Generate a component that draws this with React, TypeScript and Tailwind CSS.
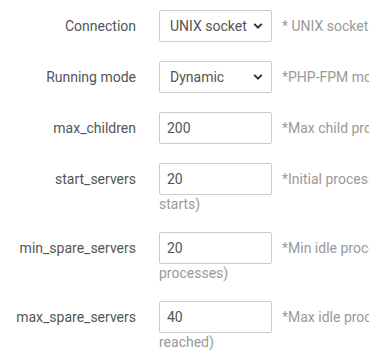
import React from "react";

type Row = {
  label: string;
  kind: "select" | "input";
  value: string;
  help: string;
  wrap?: string;
};

const rows: Row[] = [
  { label: "Connection", kind: "select", value: "UNIX socket", help: "* UNIX socket is recommended" },
  { label: "Running mode", kind: "select", value: "Dynamic", help: "*PHP-FPM mode" },
  { label: "max_children", kind: "input", value: "200", help: "*Max child processes" },
  { label: "start_servers", kind: "input", value: "20", help: "*Initial processes (when PHP", wrap: "starts)" },
  { label: "min_spare_servers", kind: "input", value: "20", help: "*Min idle processes (minimum idle", wrap: "processes)" },
  { label: "max_spare_servers", kind: "input", value: "40", help: "*Max idle processes (cleanup when", wrap: "reached)" },
];

function Chevron() {
  return (
    <svg
      className="pointer-events-none absolute right-[9px] top-1/2 -translate-y-1/2"
      width="10"
      height="7"
      viewBox="0 0 10 7"
    >
      <path d="M1.2 1.4 L5 5.2 L8.8 1.4" fill="none" stroke="#333" strokeWidth="2" />
    </svg>
  );
}

export default function App() {
  return (
    <div
      className="w-[369px] h-[354px] overflow-hidden bg-white pt-[10px] text-[14px]"
      style={{ fontFamily: "Roboto, 'Liberation Sans', sans-serif" }}
    >
      {rows.map((r) => (
        <div key={r.label} className="flex items-start mb-[19px]">
          <div className="w-[136px] shrink-0 text-right h-[32px] leading-[32px] text-[#555] whitespace-nowrap">
            {r.label}
          </div>
          <div className="ml-[23px] flex flex-col">
            <div className="flex items-center gap-[10px]">
              {r.kind === "select" ? (
                <div className="relative w-[113px] h-[32px] shrink-0">
                  <select
                    className="w-full h-full appearance-none border border-[#ccc] rounded-[2px] pl-[10px] pr-[20px] text-[#555] bg-white outline-none"
                    defaultValue={r.value}
                  >
                    <option>{r.value}</option>
                  </select>
                  <Chevron />
                </div>
              ) : (
                <input
                  readOnly
                  value={r.value}
                  className="w-[113px] h-[32px] shrink-0 border border-[#ccc] rounded-[2px] pl-[7px] text-[#555] outline-none"
                />
              )}
              <span className="text-[#999] whitespace-nowrap">{r.help}</span>
            </div>
            {r.wrap && <div className="text-[#999] leading-[18px]">{r.wrap}</div>}
          </div>
        </div>
      ))}
    </div>
  );
}
